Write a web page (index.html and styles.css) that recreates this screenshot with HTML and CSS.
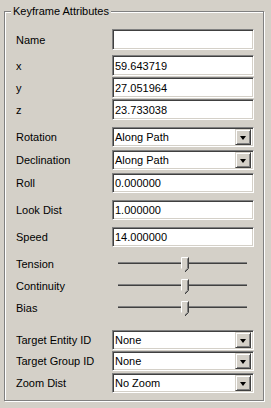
FILE: index.html
```html
<!DOCTYPE html>
<html>
<head>
<meta charset="utf-8">
<link rel="stylesheet" href="styles.css">
</head>
<body>
<div class="group">
  <span class="title">Keyframe Attributes</span>
  <div class="row edit-row r-name"><span class="lbl">Name</span><div class="edit"></div></div>
  <div class="row edit-row r-x"><span class="lbl">x</span><div class="edit">59.643719</div></div>
  <div class="row edit-row r-y"><span class="lbl">y</span><div class="edit">27.051964</div></div>
  <div class="row edit-row r-z"><span class="lbl">z</span><div class="edit">23.733038</div></div>
  <div class="row r-rot"><span class="lbl">Rotation</span><div class="edit combo"><span class="val">Along Path</span><span class="btn"><span class="arrow"></span></span></div></div>
  <div class="row r-dec"><span class="lbl">Declination</span><div class="edit combo"><span class="val">Along Path</span><span class="btn"><span class="arrow"></span></span></div></div>
  <div class="row r-roll"><span class="lbl">Roll</span><div class="edit">0.000000</div></div>
  <div class="row r-look"><span class="lbl">Look Dist</span><div class="edit">1.000000</div></div>
  <div class="row r-speed"><span class="lbl">Speed</span><div class="edit">14.000000</div></div>
  <div class="row slider-row r-ten"><span class="lbl">Tension</span><div class="slider"><div class="track"></div><svg class="thumb" width="8" height="16" viewBox="0 0 8 16"><polygon points="0.5,0.5 7.5,0.5 7.5,11.5 4,15.5 0.5,11.5" fill="#d4d0c8"/><polyline points="0.5,11.5 0.5,0.5 7,0.5" fill="none" stroke="#ffffff"/><polyline points="7.5,0.5 7.5,11.5 4,15" fill="none" stroke="#404040"/><polyline points="6.5,1.5 6.5,11.2 4,14" fill="none" stroke="#808080"/></svg></div></div>
  <div class="row slider-row r-con"><span class="lbl">Continuity</span><div class="slider"><div class="track"></div><svg class="thumb" width="8" height="16" viewBox="0 0 8 16"><polygon points="0.5,0.5 7.5,0.5 7.5,11.5 4,15.5 0.5,11.5" fill="#d4d0c8"/><polyline points="0.5,11.5 0.5,0.5 7,0.5" fill="none" stroke="#ffffff"/><polyline points="7.5,0.5 7.5,11.5 4,15" fill="none" stroke="#404040"/><polyline points="6.5,1.5 6.5,11.2 4,14" fill="none" stroke="#808080"/></svg></div></div>
  <div class="row slider-row r-bias"><span class="lbl">Bias</span><div class="slider"><div class="track"></div><svg class="thumb" width="8" height="16" viewBox="0 0 8 16"><polygon points="0.5,0.5 7.5,0.5 7.5,11.5 4,15.5 0.5,11.5" fill="#d4d0c8"/><polyline points="0.5,11.5 0.5,0.5 7,0.5" fill="none" stroke="#ffffff"/><polyline points="7.5,0.5 7.5,11.5 4,15" fill="none" stroke="#404040"/><polyline points="6.5,1.5 6.5,11.2 4,14" fill="none" stroke="#808080"/></svg></div></div>
  <div class="row r-ent"><span class="lbl">Target Entity ID</span><div class="edit combo"><span class="val">None</span><span class="btn"><span class="arrow"></span></span></div></div>
  <div class="row r-grp"><span class="lbl">Target Group ID</span><div class="edit combo"><span class="val">None</span><span class="btn"><span class="arrow"></span></span></div></div>
  <div class="row r-zoom"><span class="lbl">Zoom Dist</span><div class="edit combo"><span class="val">No Zoom</span><span class="btn"><span class="arrow"></span></span></div></div>
</div>
</body>
</html>
```

FILE: styles.css
```css
html, body {
  margin: 0;
  padding: 0;
  background: #d4d0c8;
}
body {
  width: 271px;
  height: 408px;
  overflow: hidden;
  font-family: "Liberation Sans", Arial, sans-serif;
  font-size: 11px;
  color: #000;
}
.group {
  position: relative;
  box-sizing: border-box;
  margin: 11px 0 0 4px;
  width: 260px;
  height: 390px;
  border: 1px solid #808080;
  box-shadow: inset 1px 1px 0 #ffffff, 1px 1px 0 #ffffff;
  padding: 0 0 0 11px;
  display: flex;
  flex-direction: column;
}
.title {
  position: absolute;
  left: 6px;
  top: -7px;
  padding: 0 2px;
  background: #d4d0c8;
  line-height: 13px;
}
.row {
  display: flex;
  align-items: center;
  height: 20px;
}
.edit-row { height: 21px; }
.lbl {
  width: 96px;
  flex: none;
  white-space: nowrap;
}
.edit {
  box-sizing: border-box;
  width: 142px;
  height: 100%;
  background: #fff;
  border-top: 1px solid #808080;
  border-left: 1px solid #808080;
  border-right: 1px solid #ffffff;
  border-bottom: 1px solid #ffffff;
  box-shadow: inset 1px 1px 0 #404040, inset -1px -1px 0 #d4d0c8;
  padding: 0 0 0 2px;
  display: flex;
  align-items: center;
  white-space: nowrap;
}
.combo {
  justify-content: space-between;
  padding-right: 2px;
}
.btn {
  box-sizing: border-box;
  width: 16px;
  height: 16px;
  background: #d4d0c8;
  border-top: 1px solid #d4d0c8;
  border-left: 1px solid #d4d0c8;
  border-right: 1px solid #404040;
  border-bottom: 1px solid #404040;
  box-shadow: inset 1px 1px 0 #ffffff, inset -1px -1px 0 #808080;
  display: flex;
  align-items: center;
  justify-content: center;
}
.arrow {
  width: 0;
  height: 0;
  border-left: 3.5px solid transparent;
  border-right: 3.5px solid transparent;
  border-top: 4px solid #000;
  margin-top: 1px;
}
.slider {
  position: relative;
  width: 142px;
  height: 100%;
}
.track {
  position: absolute;
  left: 6px;
  width: 129px;
  top: 8px;
  height: 0;
  border-top: 1px solid #808080;
  border-bottom: 1px solid #ffffff;
  box-shadow: 0 -1px 0 #404040 inset;
}
.track::after {
  content: "";
  display: block;
  height: 1px;
  background: #404040;
}
.thumb {
  position: absolute;
  left: 69px;
  top: 3px;
}

.r-name { margin-top: 17px; }
.r-x { margin-top: 5px; }
.r-y { margin-top: 1px; }
.r-z { margin-top: 1px; }
.r-rot { margin-top: 7px; }
.r-dec { margin-top: 3px; }
.r-roll { margin-top: 3px; }
.r-look { margin-top: 7px; }
.r-speed { margin-top: 7px; }
.r-ten { margin-top: 7px; }
.r-con { margin-top: 2px; }
.r-bias { margin-top: 2px; }
.r-ent { margin-top: 12px; }
.r-grp { margin-top: 1px; }
.r-zoom { margin-top: 2px; }
```
